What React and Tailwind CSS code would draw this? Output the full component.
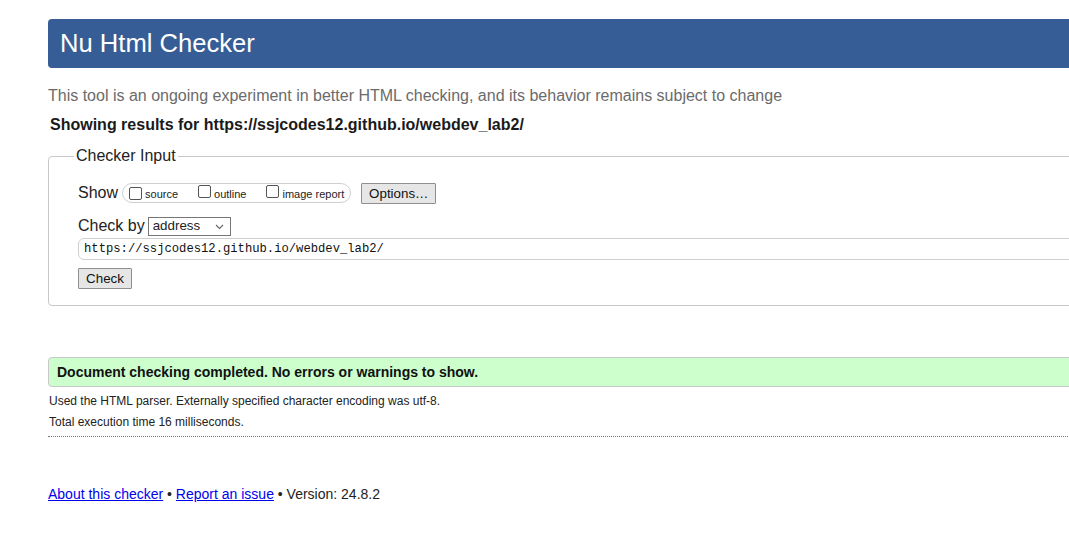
import React from "react";

function Box() {
  return (
    <span className="inline-block w-[13px] h-[13px] border border-[#555] rounded-[2px] bg-white shrink-0" />
  );
}

function Btn({ children, className = "" }) {
  return (
    <span
      className={
        "inline-flex items-center justify-center h-[21px] border border-[#8f8f8f] bg-[#e6e6e6] rounded-[1px] text-[13.33px] text-[#111] leading-none " +
        className
      }
    >
      {children}
    </span>
  );
}

export default function App() {
  return (
    <div className="w-[1069px] h-[546px] overflow-hidden bg-white font-['Liberation_Sans',Arial,sans-serif] text-[#222]">
      <div className="ml-[48px] w-[1080px] pt-[19px]">
        <div className="h-[49px] bg-[#365d95] rounded-l-[4px] flex items-center pl-[12px]">
          <h1 className="text-white text-[25.6px] leading-none font-normal">Nu Html Checker</h1>
        </div>

        <p className="mt-[18px] text-[16px] leading-[20px] text-[#6b6b6b]">
          This tool is an ongoing experiment in better HTML checking, and its behavior remains subject to change
        </p>
        <p className="mt-[9px] pl-[2px] text-[16px] leading-[20px] font-bold text-[#1a1a1a]">
          Showing results for https://ssjcodes12.github.io/webdev_lab2/
        </p>

        <fieldset className="mt-[12px] border border-[#c8c8c8] rounded-[4px] pl-[25px] pb-[16px] h-[159px]">
          <legend className="px-[2px] text-[16px] leading-[18px] text-[#222]">Checker Input</legend>
          <div className="pl-[4px]">
            <div className="mt-[17px] flex items-center h-[22px]">
              <span className="text-[16px] leading-none">Show</span>
              <span className="ml-[4px] h-[20px] flex items-center border border-[#cfcfcf] rounded-full pl-[6px] pr-[6px]">
                <Box />
                <span className="ml-[3px] text-[11px] leading-none mt-[3px]">source</span>
                <span className="ml-[20px]"><Box /></span>
                <span className="ml-[3px] text-[11px] leading-none mt-[3px]">outline</span>
                <span className="ml-[20px]"><Box /></span>
                <span className="ml-[3px] text-[11px] leading-none mt-[3px]">image report</span>
              </span>
              <Btn className="ml-[10px] w-[75px] mt-[1px]">Options…</Btn>
            </div>

            <div className="mt-[12px] flex items-center h-[20px]">
              <span className="text-[16px] leading-none">Check by</span>
              <span className="ml-[3px] w-[83px] h-[19px] border border-[#767676] flex items-center pl-[4px] pr-[6px] justify-between bg-white">
                <span className="text-[13.33px] leading-none">address</span>
                <svg width="9" height="6" viewBox="0 0 9 6" className="mt-[1px]">
                  <path d="M1 1 L4.5 4.5 L8 1" fill="none" stroke="#666" strokeWidth="1.1" />
                </svg>
              </span>
            </div>

            <div className="mt-[2px] h-[22px] border border-[#cfcfcf] rounded-[6px] flex items-center pl-[5px]">
              <span className="font-['Liberation_Mono',monospace] text-[12.2px] leading-none text-[#111]">
                https://ssjcodes12.github.io/webdev_lab2/
              </span>
            </div>

            <Btn className="mt-[8px] w-[54px]">Check</Btn>
          </div>
        </fieldset>

        <div className="mt-[51px] h-[30px] bg-[#ccffcc] border border-[#c8c8c8] rounded-l-[4px] flex items-center pl-[8px]">
          <span className="text-[14px] leading-none font-bold text-[#111]">
            Document checking completed. No errors or warnings to show.
          </span>
        </div>

        <p className="mt-[7px] pl-[1px] text-[12px] leading-[14px] text-[#222]">
          Used the HTML parser. Externally specified character encoding was utf-8.
        </p>
        <p className="mt-[7px] pl-[1px] text-[12px] leading-[14px] text-[#222]">
          Total execution time 16 milliseconds.
        </p>
        <div className="mt-[7px] border-t border-dotted border-[#777]" />

        <p className="mt-[49px] text-[14px] leading-[16px] text-[#222]">
          <a href="#" className="text-[#0000ee] underline">About this checker</a>
          {" • "}
          <a href="#" className="text-[#0000ee] underline">Report an issue</a>
          {" • Version: 24.8.2"}
        </p>
      </div>
    </div>
  );
}
